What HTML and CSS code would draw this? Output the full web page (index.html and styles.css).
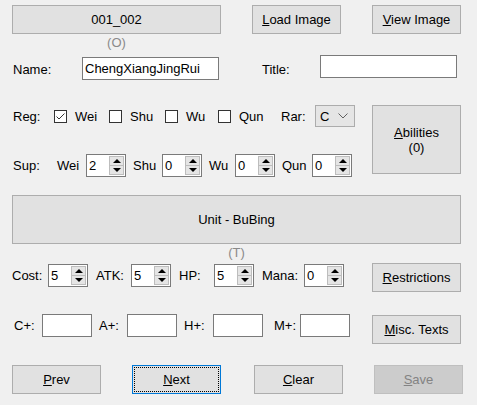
FILE: index.html
```html
<!DOCTYPE html>
<html lang="en">
<head>
  <meta charset="UTF-8" />
  <title>Card Editor</title>
  <link rel="stylesheet" href="styles.css">
</head>
<body>
  <div class="form">
    <div class="top-row">
      <button class="btn id-btn">001_002</button>
      <button class="btn"><u>L</u>oad Image</button>
      <button class="btn"><u>V</u>iew Image</button>
    </div>
    <div class="hint hint-o">(O)</div>

    <div class="name-row">
      <span class="lbl name-lbl">Name:</span>
      <input class="text name-box" type="text" value="ChengXiangJingRui" />
      <span class="lbl title-lbl">Title:</span>
      <input class="text title-box" type="text" value="" />
    </div>

    <div class="faction">
      <div class="faction-rows">
        <div class="reg-row">
          <span class="lbl">Reg:</span>
          <label class="check"><span class="box"><svg width="11" height="11" viewBox="0 0 11 11"><polyline points="1.5,5.5 4,8 9.5,2.5" fill="none" stroke="#333" stroke-width="1"/></svg></span>Wei</label>
          <label class="check"><span class="box"></span>Shu</label>
          <label class="check"><span class="box"></span>Wu</label>
          <label class="check"><span class="box"></span>Qun</label>
          <span class="lbl">Rar:</span>
          <div class="combo"><span>C</span><svg width="10" height="6" viewBox="0 0 10 6"><polyline points="0.5,0.5 5,5 9.5,0.5" fill="none" stroke="#606060" stroke-width="1"/></svg></div>
        </div>
        <div class="sup-row">
          <span class="lbl">Sup:</span>
          <span class="lbl">Wei</span>
          <div class="spin"><span class="spin-val">2</span><span class="spin-btns"><span class="up"></span><span class="down"></span></span></div>
          <span class="lbl pad">Shu</span>
          <div class="spin"><span class="spin-val">0</span><span class="spin-btns"><span class="up"></span><span class="down"></span></span></div>
          <span class="lbl pad">Wu</span>
          <div class="spin"><span class="spin-val">0</span><span class="spin-btns"><span class="up"></span><span class="down"></span></span></div>
          <span class="lbl pad">Qun</span>
          <div class="spin"><span class="spin-val">0</span><span class="spin-btns"><span class="up"></span><span class="down"></span></span></div>
        </div>
      </div>
      <button class="btn abilities"><u>A</u>bilities<br />(0)</button>
    </div>

    <button class="btn unit-btn">Unit - BuBing</button>
    <div class="hint hint-t">(T)</div>

    <div class="stat-row">
      <div class="stats">
        <span class="lbl">Cost:</span>
        <div class="spin"><span class="spin-val">5</span><span class="spin-btns"><span class="up"></span><span class="down"></span></span></div>
        <span class="lbl pad">ATK:</span>
        <div class="spin"><span class="spin-val">5</span><span class="spin-btns"><span class="up"></span><span class="down"></span></span></div>
        <span class="lbl pad">HP:</span>
        <div class="spin"><span class="spin-val">5</span><span class="spin-btns"><span class="up"></span><span class="down"></span></span></div>
        <span class="lbl pad">Mana:</span>
        <div class="spin"><span class="spin-val">0</span><span class="spin-btns"><span class="up"></span><span class="down"></span></span></div>
      </div>
      <button class="btn side-btn"><u>R</u>estrictions</button>
    </div>

    <div class="plus-row">
      <div class="pluses">
        <span class="lbl c-lbl">C+:</span>
        <input class="text plus-box" type="text" />
        <span class="lbl pad">A+:</span>
        <input class="text plus-box" type="text" />
        <span class="lbl pad">H+:</span>
        <input class="text plus-box" type="text" />
        <span class="lbl m-lbl">M+:</span>
        <input class="text plus-box" type="text" />
      </div>
      <button class="btn side-btn"><u>M</u>isc. Texts</button>
    </div>

    <div class="bottom-row">
      <button class="btn"><u>P</u>rev</button>
      <button class="btn focused"><u>N</u>ext</button>
      <button class="btn"><u>C</u>lear</button>
      <button class="btn" disabled><u>S</u>ave</button>
    </div>
  </div>
</body>
</html>
```

FILE: styles.css
```css
* { box-sizing: border-box; }
body { margin: 0; background: #f0f0f0; font: 13px "Liberation Sans", Arial, sans-serif; color: #000; }
.form { padding: 5px 0 0 12px; width: 477px; height: 405px; }

.btn { font: inherit; color: #000; background: #e1e1e1; border: 1px solid #adadad; width: 89px; height: 29px; padding: 0; line-height: 15px; }
.btn:disabled { background: #cccccc; border-color: #bfbfbf; color: #838383; }
.btn.focused { border-color: #0078d7; outline: 1px dotted #000; outline-offset: -3px; }

.lbl { line-height: 15px; white-space: nowrap; }
.lbl.pad { padding-left: 7px; }

.text { font: inherit; color: #000; background: #fff; border: 1px solid #7a7a7a; height: 23px; padding: 0 2px; margin: 0; outline: none; }

.hint { color: #8a8a8a; text-align: center; line-height: 14px; padding-top: 2px; }
.hint-o { width: 209px; height: 21px; }
.hint-t { width: 449px; height: 19px; }

.top-row { display: flex; gap: 31px; }
.id-btn { width: 209px; }

.name-row { display: flex; align-items: flex-start; height: 25px; }
.name-row .lbl { margin-top: 7px; }
.name-lbl { width: 70px; padding-left: 1px; }
.name-box { width: 137px; margin-top: 2px; }
.title-lbl { width: 58px; margin-left: 43px; }
.title-box { width: 137px; }

.faction { display: flex; margin-top: 25px; height: 69px; }
.faction-rows { width: 343px; }
.abilities { margin-left: 17px; height: 69px; }

.reg-row { display: grid; grid-template-columns: 42px 55px 56px 53px 63px 34px 40px; align-items: center; height: 22px; }
.reg-row > .lbl:first-child { padding-left: 1px; }
.check { display: flex; align-items: center; gap: 8px; line-height: 15px; }
.box { width: 13px; height: 13px; border: 1px solid #333; background: #fff; display: flex; align-items: center; justify-content: center; }
.combo { height: 22px; background: #e5e5e5; border: 1px solid #acacac; display: flex; align-items: center; justify-content: space-between; padding: 0 6px 0 4px; }

.sup-row { display: grid; grid-template-columns: 45px 29px 40px 36px 40px 33px 40px 37px 40px; align-items: center; height: 23px; margin-top: 27px; }
.sup-row > .lbl:first-child { padding-left: 1px; }

.spin { display: flex; width: 40px; height: 23px; border: 1px solid #7a7a7a; background: #fff; }
.spin-val { flex: 1; padding-left: 2px; line-height: 21px; }
.spin-btns { width: 16px; display: flex; flex-direction: column; padding: 1px 1px 1px 0; }
.spin-btns span { flex: 1; background: #e5e5e5; border: 1px solid #bdbdbd; display: flex; align-items: center; justify-content: center; }
.spin-btns .down { border-top: none; }
.spin-btns span::before { content: ""; border-left: 4px solid transparent; border-right: 4px solid transparent; }
.spin-btns .up::before { border-bottom: 4px solid #000; }
.spin-btns .down::before { border-top: 4px solid #000; }

.unit-btn { width: 449px; height: 49px; margin-top: 21px; display: block; }

.stat-row { display: flex; align-items: flex-start; height: 29px; }
.stats { display: grid; grid-template-columns: 36px 40px 43px 40px 43px 40px 50px 40px; align-items: center; margin-top: 1px; width: 332px; }
.stats > .lbl.pad { padding-left: 8px; }
.stat-row .side-btn { margin-left: 28px; }

.plus-row { display: flex; align-items: flex-start; height: 29px; margin-top: 22px; }
.pluses { display: grid; grid-template-columns: 30px 50px 35px 50px 36px 50px 37px 50px; align-items: center; width: 338px; }
.c-lbl { padding-left: 2px; }
.m-lbl { padding-left: 11px; }
.plus-box { width: 50px; }
.plus-row .side-btn { margin-left: 22px; margin-top: 1px; }

.bottom-row { display: flex; margin-top: 22px; }
.bottom-row .btn + .btn { margin-left: 31px; }
.bottom-row .btn:nth-child(3) { margin-left: 33px; }
```
